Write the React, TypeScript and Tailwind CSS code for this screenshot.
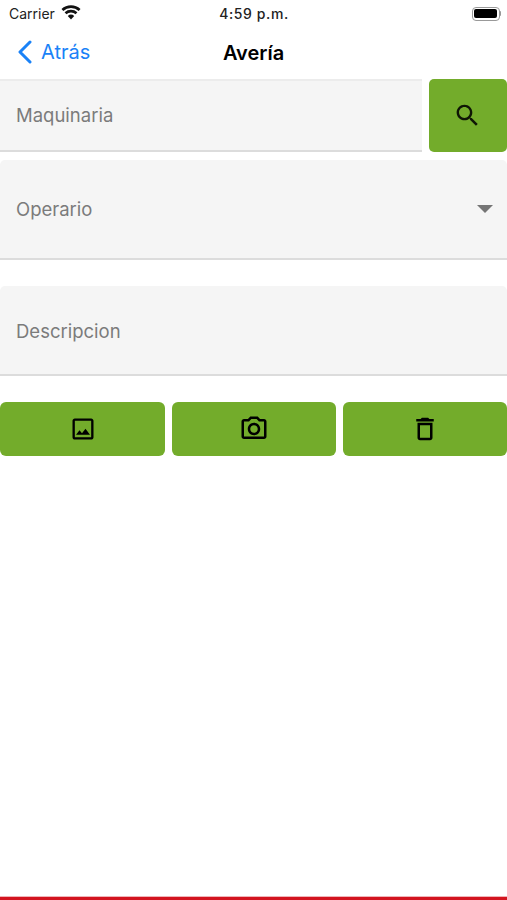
const sans = 'font-["Inter","Liberation_Sans",sans-serif]';

function IconImage() {
  return (
    <svg width="28" height="28" viewBox="0 0 24 24" fill="black">
      <path d="M19 5v14H5V5h14m0-2H5c-1.1 0-2 .9-2 2v14c0 1.100.9 2 2 2h14c1.100 0 2-.9 2-2V5c0-1.100-.9-2-2-2zm-4.860 8.860l-3 3.870L9 13.140 6 17h12l-3.860-5.140z" />
    </svg>
  );
}

function IconCamera() {
  return (
    <svg width="30" height="30" viewBox="0 0 24 24" fill="black">
      <path d="M20 4h-3.170L15 2H9L7.170 4H4c-1.100 0-2 .9-2 2v12c0 1.100.9 2 2 2h16c1.100 0 2-.9 2-2V6c0-1.100-.9-2-2-2zm0 14H4V6h4.050l1.830-2h4.240l1.830 2H20v12zM12 7c-2.760 0-5 2.240-5 5s2.240 5 5 5 5-2.240 5-5-2.240-5-5-5zm0 8c-1.650 0-3-1.350-3-3s1.350-3 3-3 3 1.350 3 3-1.350 3-3 3z" />
    </svg>
  );
}

function IconTrash() {
  return (
    <svg width="30" height="30" viewBox="0 0 24 24" fill="black">
      <path d="M16 9v10H8V9h8m-1.500-6h-5l-1 1H5v2h14V4h-3.500l-1-1zM18 7H6v12c0 1.100.9 2 2 2h8c1.100 0 2-.9 2-2V7z" />
    </svg>
  );
}

function IconSearch() {
  return (
    <svg width="29" height="29" viewBox="0 0 24 24" fill="black" fillOpacity="0.87" className="-ml-[2px]">
      <path d="M15.500 14h-.79l-.28-.27C15.410 12.590 16 11.110 16 9.500 16 5.910 13.090 3 9.500 3S3 5.910 3 9.500 5.910 16 9.500 16c1.610 0 3.090-.59 4.230-1.570l.27.28v.79l5 4.990L20.490 19l-4.990-5zm-6 0C7.010 14 5 11.990 5 9.500S7.010 5 9.500 5 14 7.010 14 9.500 11.990 14 9.500 14z" />
    </svg>
  );
}

function StatusBar() {
  return (
    <div className="h-[27px] flex items-center justify-between pl-[9px] pr-[6px] text-[14px] text-[#222]">
      <div className="flex items-center gap-[6px] w-[108px]">
        <span>Carrier</span>
        <svg width="20" height="15" viewBox="0 0 20 15" fill="#111" className="-mt-[3px]">
          <path d="M10 14.500 L6.800 10.900 A5 5 0 0 1 13.200 10.900 Z" />
          <path d="M5.400 9.300 L3.600 7.300 A9.600 9.600 0 0 1 16.400 7.300 L14.600 9.300 A7 7 0 0 0 5.400 9.300 Z" />
          <path d="M2.300 5.900 L.5 3.900 A14 14 0 0 1 19.500 3.900 L17.700 5.900 A11.500 11.500 0 0 0 2.300 5.900 Z" />
        </svg>
      </div>
      <span className="font-medium tracking-[0.6px]">4:59 p.m.</span>
      <div className="w-[110px] flex justify-end items-center">
        <div className="w-[28px] h-[14px] rounded-[4px] border border-[#999] p-[1.5px]">
          <div className="w-full h-full rounded-[2px] bg-black" />
        </div>
        <div className="w-[1.5px] h-[5px] bg-[#999] rounded-r-sm" />
      </div>
    </div>
  );
}

function NavBar() {
  return (
    <div className="h-[52px] relative flex items-center justify-center">
      <div className="absolute left-[17px] top-[13px] flex items-center gap-[9px] text-[#1a82f7]">
        <svg width="15" height="24" viewBox="0 0 15 24" fill="none" stroke="currentColor" strokeWidth="3" strokeLinecap="round" strokeLinejoin="round">
          <path d="M13 2 L3 12 L13 22" />
        </svg>
        <span className="text-[20px] leading-none">Atrás</span>
      </div>
      <span className="text-[20px] font-semibold text-black">Avería</span>
    </div>
  );
}

function ActionButton({ children }: { children: React.ReactNode }) {
  return (
    <button className="h-[54px] rounded-[6px] bg-[#73ac2b] flex items-center justify-center">
      {children}
    </button>
  );
}

export default function App() {
  return (
    <div className={`${sans} w-[507px] h-[900px] bg-white flex flex-col overflow-hidden`}>
      <StatusBar />
      <NavBar />

      <div className="flex gap-[7px] items-start">
        <div className="flex-1 h-[73px] bg-[#f5f5f5] border-t-2 border-t-[#ececec] border-b-2 border-b-[#dcdcdc] flex items-center pl-4">
          <span className="text-[18.500px] text-[#7b7b7b]">Maquinaria</span>
        </div>
        <button className="w-[78px] h-[73px] rounded-[5px] bg-[#73ac2b] flex items-center justify-center">
          <IconSearch />
        </button>
      </div>

      <div className="mt-[8px] h-[100px] rounded-t-[5px] bg-[#f5f5f5] border-b-2 border-b-[#dcdcdc] flex items-center justify-between pl-4 pr-[14px]">
        <span className="text-[18.500px] text-[#7b7b7b] pt-[2px]">Operario</span>
        <div className="w-0 h-0 border-l-[8px] border-r-[8px] border-t-[8px] border-l-transparent border-r-transparent border-t-[#757575]" />
      </div>

      <div className="mt-[26px] h-[90px] rounded-t-[5px] bg-[#f5f5f5] border-b-2 border-b-[#dcdcdc] flex items-center pl-4 pt-[4px]">
        <span className="text-[18.500px] text-[#7b7b7b]">Descripcion</span>
      </div>

      <div className="mt-[26px] grid grid-cols-[165px_164px_164px] gap-[7px]">
        <ActionButton><IconImage /></ActionButton>
        <ActionButton><IconCamera /></ActionButton>
        <ActionButton><IconTrash /></ActionButton>
      </div>

      <div className="mt-auto h-[1px] bg-[#f0b4b8]" />
      <div className="h-[3px] bg-[#d3141f]" />
    </div>
  );
}
